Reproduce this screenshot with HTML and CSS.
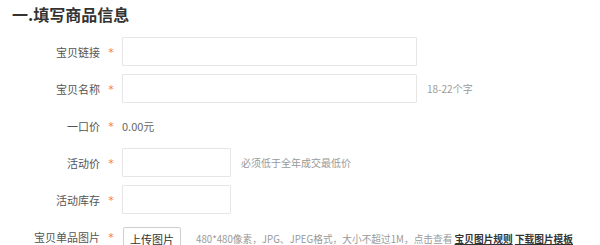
FILE: index.html
```html
<!DOCTYPE html>
<html lang="zh-CN">
<head>
<meta charset="utf-8">
<title>填写商品信息</title>
<link rel="stylesheet" href="styles.css">
</head>
<body>
<h2 class="title">一.填写商品信息</h2>
<div class="form">
  <div class="row">
    <label class="label">宝贝链接</label><span class="star">*</span>
    <input class="input wide" type="text">
  </div>
  <div class="row">
    <label class="label">宝贝名称</label><span class="star">*</span>
    <input class="input wide" type="text">
    <span class="hint">18-22个字</span>
  </div>
  <div class="row">
    <label class="label">一口价</label><span class="star">*</span>
    <span class="value">0.00元</span>
  </div>
  <div class="row">
    <label class="label">活动价</label><span class="star">*</span>
    <input class="input short" type="text">
    <span class="hint">必须低于全年成交最低价</span>
  </div>
  <div class="row">
    <label class="label">活动库存</label><span class="star">*</span>
    <input class="input short" type="text">
  </div>
  <div class="row">
    <label class="label">宝贝单品图片</label><span class="star">*</span>
    <button class="btn" type="button">上传图片</button>
    <span class="hint hint-upload">480*480像素，JPG、JPEG格式，大小不超过1M，点击查看 <a class="link" href="#">宝贝图片规则</a> <a class="link" href="#">下载图片模板</a></span>
  </div>
</div>
</body>
</html>
```
FILE: styles.css
```css
html, body {
  margin: 0;
  padding: 0;
  background: #fff;
  font-family: "Noto Sans CJK SC", "Noto Sans", sans-serif;
  overflow: hidden;
}
.title {
  margin: 0;
  padding-left: 12px;
  height: 28px;
  line-height: 28px;
  font-size: 16px;
  font-weight: bold;
  color: #333;
}
.form {
  margin-top: 9px;
  display: flex;
  flex-direction: column;
  gap: 8px;
}
.row {
  display: flex;
  align-items: center;
  height: 29px;
}
.label {
  width: 100px;
  text-align: right;
  font-size: 11px;
  color: #555;
  line-height: 14px;
}
.star {
  width: 22px;
  text-align: center;
  color: #f07a5a;
  font-size: 11px;
  font-family: "DejaVu Sans", sans-serif;
  line-height: 14px;
  padding-top: 3px;
}
.input {
  box-sizing: border-box;
  height: 29px;
  border: 1px solid #e6e6e6;
  border-radius: 1px;
  background: #fff;
  margin: 0;
  padding: 0 6px;
  outline: none;
}
.wide { width: 295px; }
.short { width: 109px; }
.hint {
  margin-left: 10px;
  font-size: 10px;
  color: #999;
  line-height: 14px;
  white-space: nowrap;
}
.value {
  font-size: 11px;
  color: #666;
  line-height: 14px;
}
.btn {
  box-sizing: border-box;
  margin: 4px 0 0 1px;
  width: 58px;
  height: 24px;
  padding: 0;
  border: 1px solid #cfcfcf;
  border-radius: 2px;
  background: #fff;
  font-family: "Noto Sans CJK SC", sans-serif;
  font-size: 11px;
  color: #333;
}
.hint-upload {
  margin-left: 15px;
  margin-top: 4px;
  font-size: 9.7px;
}
.link {
  color: #333;
  font-weight: bold;
  text-decoration: underline;
}
```
